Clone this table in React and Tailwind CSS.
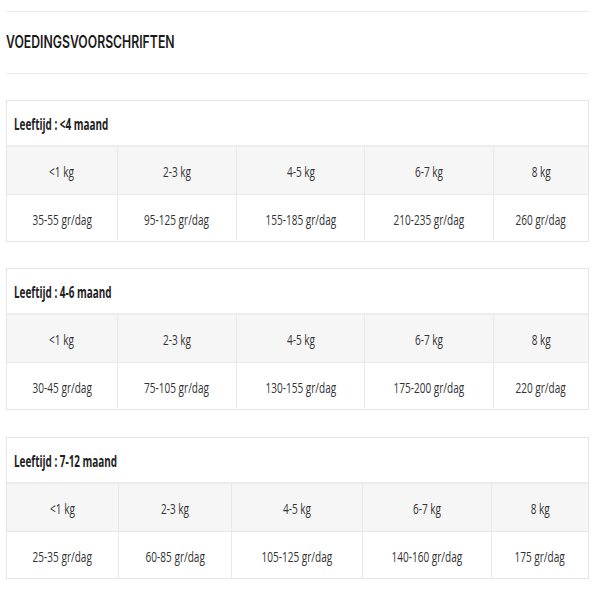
import React from "react";

const tables = [
  {
    label: "Leeftijd : <4 maand",
    cols: "grid-cols-[111px_119px_128px_129px_1fr]",
    weights: ["<1 kg", "2-3 kg", "4-5 kg", "6-7 kg", "8 kg"],
    amounts: ["35-55 gr/dag", "95-125 gr/dag", "155-185 gr/dag", "210-235 gr/dag", "260 gr/dag"],
  },
  {
    label: "Leeftijd : 4-6 maand",
    cols: "grid-cols-[111px_119px_128px_129px_1fr]",
    weights: ["<1 kg", "2-3 kg", "4-5 kg", "6-7 kg", "8 kg"],
    amounts: ["30-45 gr/dag", "75-105 gr/dag", "130-155 gr/dag", "175-200 gr/dag", "220 gr/dag"],
  },
  {
    label: "Leeftijd : 7-12 maand",
    cols: "grid-cols-[112px_113px_131px_129px_1fr]",
    weights: ["<1 kg", "2-3 kg", "4-5 kg", "6-7 kg", "8 kg"],
    amounts: ["25-35 gr/dag", "60-85 gr/dag", "105-125 gr/dag", "140-160 gr/dag", "175 gr/dag"],
  },
];

function Cell({ children, last }) {
  return (
    <div
      className={
        "flex items-center justify-center whitespace-nowrap pt-[2px] " +
        (last ? "" : "border-r border-[#e8e8e8]")
      }
    >
      <span className="inline-block scale-x-[0.67] text-[15px] text-[#333]">{children}</span>
    </div>
  );
}

function FeedTable({ t, mt }) {
  return (
    <div className={"border border-[#e6e6e6] " + mt}>
      <div className="h-[46px] flex items-center pl-[7px] pt-[2px] border-b-2 border-[#ececec]">
        <span className="inline-block origin-left scale-x-[0.62] text-[16px] font-bold text-[#222] whitespace-nowrap">
          {t.label}
        </span>
      </div>
      <div className={"grid h-[48px] bg-[#f6f6f6] border-b border-[#e8e8e8] " + t.cols}>
        {t.weights.map((w, i) => (
          <Cell key={i} last={i === 4}>{w}</Cell>
        ))}
      </div>
      <div className={"grid h-[46px] " + t.cols}>
        {t.amounts.map((w, i) => (
          <Cell key={i} last={i === 4}>{w}</Cell>
        ))}
      </div>
    </div>
  );
}

export default function App() {
  return (
    <div
      className="w-[600px] h-[600px] bg-white overflow-hidden"
      style={{ fontFamily: '"Open Sans", "Liberation Sans", sans-serif' }}
    >
      <div className="pl-[6px] pr-[11px] pt-[11px]">
        <div className="border-t border-[#ebebeb]" />
        <div className="h-[61px] flex items-center">
          <h2
            className="inline-block origin-left scale-x-[0.72] text-[17px] font-semibold uppercase text-[#1a1a1a] whitespace-nowrap"
            style={{ fontFamily: 'Inter, "Liberation Sans", sans-serif' }}
          >
            VOEDINGSVOORSCHRIFTEN
          </h2>
        </div>
        <div className="border-t border-[#ebebeb]" />
        <FeedTable t={tables[0]} mt="mt-[26px]" />
        <FeedTable t={tables[1]} mt="mt-[26px]" />
        <FeedTable t={tables[2]} mt="mt-[27px]" />
      </div>
    </div>
  );
}
